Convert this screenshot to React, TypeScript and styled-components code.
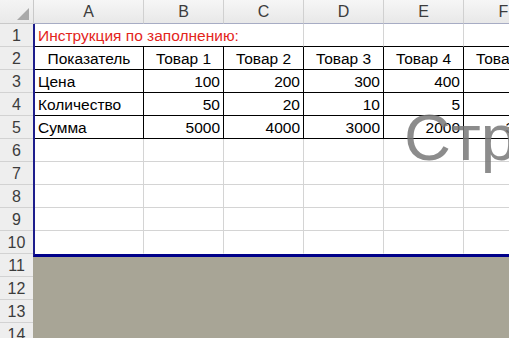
import React from "react";
import styled, { createGlobalStyle } from "styled-components";

const Global = createGlobalStyle`
  html, body { margin: 0; padding: 0; background: #ffffff; overflow: hidden; }
  body { font-family: "Liberation Sans", Arial, sans-serif; }
`;

const COLS = [109, 80, 80, 80, 80, 80];
const ROW_H = 23;
const HEAD_H = 24;
const RH_W = 34;

const Sheet = styled.div`
  position: relative;
  width: 509px;
  height: 338px;
  overflow: hidden;
  display: flex;
  flex-direction: column;
  font-size: 15.5px;
  color: #000;
`;

const HeaderRow = styled.div`
  display: flex;
  height: ${HEAD_H}px;
  flex: none;
`;

const Corner = styled.div`
  position: relative;
  width: ${RH_W}px;
  flex: none;
  box-sizing: border-box;
  background: linear-gradient(#f4f4f4, #e9e9e9);
  border-right: 1px solid #c9c9c9;
  border-bottom: 1px solid #c9c9c9;
`;

const CornerTriangle = styled.div`
  position: absolute;
  right: 4px;
  bottom: 3px;
  width: 0;
  height: 0;
  border-left: 12px solid transparent;
  border-bottom: 12px solid #a9a9a9;
`;

const ColHead = styled.div<{ $w: number }>`
  width: ${(p) => p.$w}px;
  flex: none;
  box-sizing: border-box;
  display: flex;
  align-items: center;
  justify-content: center;
  padding-top: 1px;
  background: linear-gradient(#f6f6f6, #e8e8e8);
  border-right: 1px solid #d0d0d0;
  border-bottom: 1px solid #a7acc4;
  color: #3c3c3c;
  font-size: 16px;
`;

const Body = styled.div`
  display: flex;
  flex: 1;
  min-height: 0;
`;

const RowHeaders = styled.div`
  width: ${RH_W - 1}px;
  flex: none;
  display: flex;
  flex-direction: column;
`;

const RowHead = styled.div`
  height: ${ROW_H}px;
  flex: none;
  box-sizing: border-box;
  display: flex;
  align-items: center;
  justify-content: center;
  padding-top: 1px;
  background: #eeeeee;
  border-bottom: 1px solid #d2d2d2;
  color: #3c3c3c;
  font-size: 16px;
`;

const Canvas = styled.div`
  flex: 1;
  display: flex;
  flex-direction: column;
  min-width: 0;
`;

const PrintArea = styled.div`
  display: grid;
  grid-template-columns: ${COLS.map((c) => c + "px").join(" ")};
  grid-auto-rows: ${ROW_H}px;
  border-left: 2px solid #1d1d8c;
  border-bottom: 3px solid #00008a;
  box-shadow: 0 1px 0 #9a98c8;
  background: #fff;
  flex: none;
`;

const Cell = styled.div<{
  $align?: "left" | "right" | "center";
  $right?: string;
  $bottom?: string;
  $span?: number;
  $color?: string;
}>`
  box-sizing: border-box;
  grid-column: span ${(p) => p.$span ?? 1};
  display: flex;
  align-items: center;
  justify-content: ${(p) =>
    p.$align === "right" ? "flex-end" : p.$align === "center" ? "center" : "flex-start"};
  padding: 2px 3px 0 3px;
  border-right: 1px solid ${(p) => p.$right ?? "#d4d4d4"};
  border-bottom: 1px solid ${(p) => p.$bottom ?? "#d4d4d4"};
  color: ${(p) => p.$color ?? "#000"};
  white-space: nowrap;
  overflow: visible;
`;

const GreyArea = styled.div`
  flex: 1;
  background: #a8a596;
`;

const Watermark = styled.div`
  position: absolute;
  left: 404px;
  top: 100px;
  font-family: "Liberation Sans", Arial, sans-serif;
  font-size: 65px;
  color: rgba(120, 120, 120, 0.85);
  white-space: nowrap;
  pointer-events: none;
`;

const BLACK = "#000";

const table: { a: string; vals: string[]; align: "left" | "center" }[] = [
  { a: "Показатель", vals: ["Товар 1", "Товар 2", "Товар 3", "Товар 4", "Товар 5"], align: "center" },
  { a: "Цена", vals: ["100", "200", "300", "400", "500"], align: "left" },
  { a: "Количество", vals: ["50", "20", "10", "5", "6"], align: "left" },
  { a: "Сумма", vals: ["5000", "4000", "3000", "2000", "3000"], align: "left" },
];

export default function App() {
  const letters = ["A", "B", "C", "D", "E", "F"];
  return (
    <>
      <Global />
      <Sheet>
        <HeaderRow>
          <Corner>
            <CornerTriangle />
          </Corner>
          {letters.map((l, i) => (
            <ColHead key={l} $w={COLS[i] + (i === 0 ? 1 : 0)}>
              {l}
            </ColHead>
          ))}
        </HeaderRow>
        <Body>
          <RowHeaders>
            {Array.from({ length: 14 }, (_, i) => (
              <RowHead key={i}>{i + 1}</RowHead>
            ))}
          </RowHeaders>
          <Canvas>
            <PrintArea>
              <Cell $span={3} $bottom={BLACK} $color="#e3241b">
                Инструкция по заполнению:
              </Cell>
              <Cell $bottom={BLACK} />
              <Cell $bottom={BLACK} />
              <Cell $bottom={BLACK} />
              {table.map((row, r) => (
                <React.Fragment key={r}>
                  <Cell $align={row.align} $right={BLACK} $bottom={BLACK}>
                    {row.a}
                  </Cell>
                  {row.vals.map((v, i) => (
                    <Cell
                      key={i}
                      $align={r === 0 ? "center" : "right"}
                      $right={BLACK}
                      $bottom={BLACK}
                    >
                      {v}
                    </Cell>
                  ))}
                </React.Fragment>
              ))}
              {Array.from({ length: 5 }, (_, r) =>
                COLS.map((_, c) => (
                  <Cell key={`e${r}-${c}`} $bottom={r === 4 ? "transparent" : undefined} />
                ))
              )}
            </PrintArea>
            <GreyArea />
          </Canvas>
        </Body>
        <Watermark>Страница 1</Watermark>
      </Sheet>
    </>
  );
}
